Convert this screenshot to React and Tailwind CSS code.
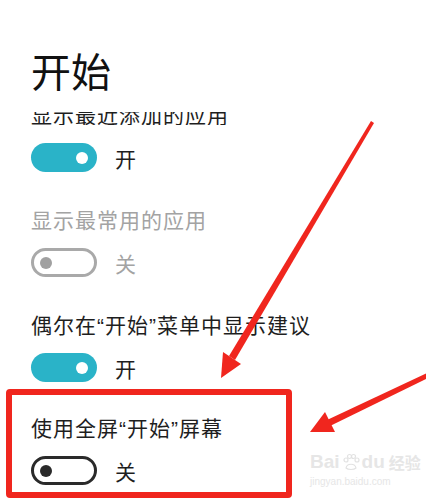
import React from "react";

const font = { fontFamily: '"Noto Sans CJK SC", "Noto Sans", sans-serif' };
const quote = { fontFamily: '"Liberation Sans", sans-serif' };

function Toggle({ on, disabled }) {
  if (on) {
    return (
      <div className="flex h-[29px] w-[66px] items-center justify-end rounded-full bg-[#2ab3c8] pr-[9px]">
        <div className="h-[12px] w-[12px] rounded-full bg-white" />
      </div>
    );
  }
  return (
    <div
      className={
        disabled
          ? "flex h-[29px] w-[66px] items-center rounded-full border-[3px] border-[#a9a9a9] pl-[6px]"
          : "flex h-[29px] w-[66px] items-center rounded-full border-[3px] border-[#2a2a2a] pl-[6px]"
      }
    >
      <div
        className={
          disabled
            ? "h-[12px] w-[12px] rounded-full bg-[#a0a0a0]"
            : "h-[12px] w-[12px] rounded-full bg-[#2a2a2a]"
        }
      />
    </div>
  );
}

function Setting({ label, on, disabled }) {
  return (
    <div className="flex flex-col">
      <div
        className={
          disabled
            ? "h-[22px] text-[21px] leading-[22px] tracking-[1px] text-[#a3a3a3]"
            : "h-[22px] text-[21px] leading-[22px] tracking-[1px] text-[#1e1e1e]"
        }
      >
        {label}
      </div>
      <div className="mt-[18px] flex items-center gap-[18px]">
        <Toggle on={on} disabled={disabled} />
        <span
          className={
            disabled
              ? "text-[21px] leading-[22px] text-[#a3a3a3]"
              : "text-[21px] leading-[22px] text-[#1e1e1e]"
          }
        >
          {on ? "开" : "关"}
        </span>
      </div>
    </div>
  );
}

export default function App() {
  return (
    <div className="relative h-[500px] w-[426px] overflow-hidden bg-white" style={font}>
      <div className="flex flex-col pl-[31px]">
        {/* header */}
        <div className="pt-[50px] text-[40px] leading-[40px] text-[#111]">开始</div>

        {/* first row, scrolled under the header */}
        <div className="mt-[22px] flex flex-col">
          <div className="h-[13px] overflow-hidden">
            <div className="-mt-[9px] h-[22px] text-[21px] leading-[22px] tracking-[1px] text-[#1e1e1e]">
              显示最近添加的应用
            </div>
          </div>
          <div className="mt-[18px] flex items-center gap-[18px]">
            <Toggle on />
            <span className="text-[21px] leading-[22px] text-[#1e1e1e]">开</span>
          </div>
        </div>

        <div className="mt-[36px]">
          <Setting label="显示最常用的应用" disabled />
        </div>
        <div className="mt-[36px]">
          <Setting
            on
            label={
              <>
                偶尔在<span style={quote}>“</span>开始<span style={quote}>”</span>菜单中显示建议
              </>
            }
          />
        </div>

        {/* highlighted setting */}
        <div className="-ml-[25px] mt-[7px] w-[286px] rounded-[4px] border-[6px] border-[#f0261e] pb-[7px] pl-[19px] pt-[21px]">
          <Setting
            label={
              <>
                使用全屏<span style={quote}>“</span>开始<span style={quote}>”</span>屏幕
              </>
            }
          />
        </div>
      </div>

      {/* annotation arrows */}
      <svg className="absolute left-0 top-0" width="426" height="500" viewBox="0 0 426 500">
        <polygon points="371,121 374,123 235,360 229,356" fill="#f0261e" />
        <polygon points="221,378 223,352 241,364" fill="#f0261e" />
        <polygon points="427,373 428,378 330,426 327,420" fill="#f0261e" />
        <polygon points="310,432 325,412 335,432" fill="#f0261e" />
      </svg>

      {/* watermark */}
      <div className="absolute left-[310px] top-[452px] flex flex-col items-start text-[#e6e6e6]">
        <div
          className="flex items-center gap-[2px] text-[19px] font-bold leading-[20px]"
          style={{ fontFamily: '"Liberation Sans", "Noto Sans CJK SC", sans-serif' }}
        >
          <span>Bai</span>
          <svg width="18" height="18" viewBox="0 0 18 18">
            <circle cx="4" cy="7" r="2" fill="none" stroke="#e2e2e2" strokeWidth="1.2" />
            <circle cx="7.5" cy="3.5" r="2" fill="none" stroke="#e2e2e2" strokeWidth="1.2" />
            <circle cx="11.5" cy="3.5" r="2" fill="none" stroke="#e2e2e2" strokeWidth="1.2" />
            <circle cx="15" cy="7" r="2" fill="none" stroke="#e2e2e2" strokeWidth="1.2" />
            <path d="M4 15 C5 10 13 10 14 15 C12 17 6 17 4 15 Z" fill="none" stroke="#e2e2e2" strokeWidth="1.2" />
          </svg>
          <span>du</span>
          <span className="ml-[2px] text-[16px]" style={font}>经验</span>
        </div>
        <div className="mt-[5px] text-[10px] leading-[10px]" style={{ fontFamily: '"Liberation Sans", sans-serif' }}>
          jingyan.baidu.com
        </div>
      </div>
    </div>
  );
}
